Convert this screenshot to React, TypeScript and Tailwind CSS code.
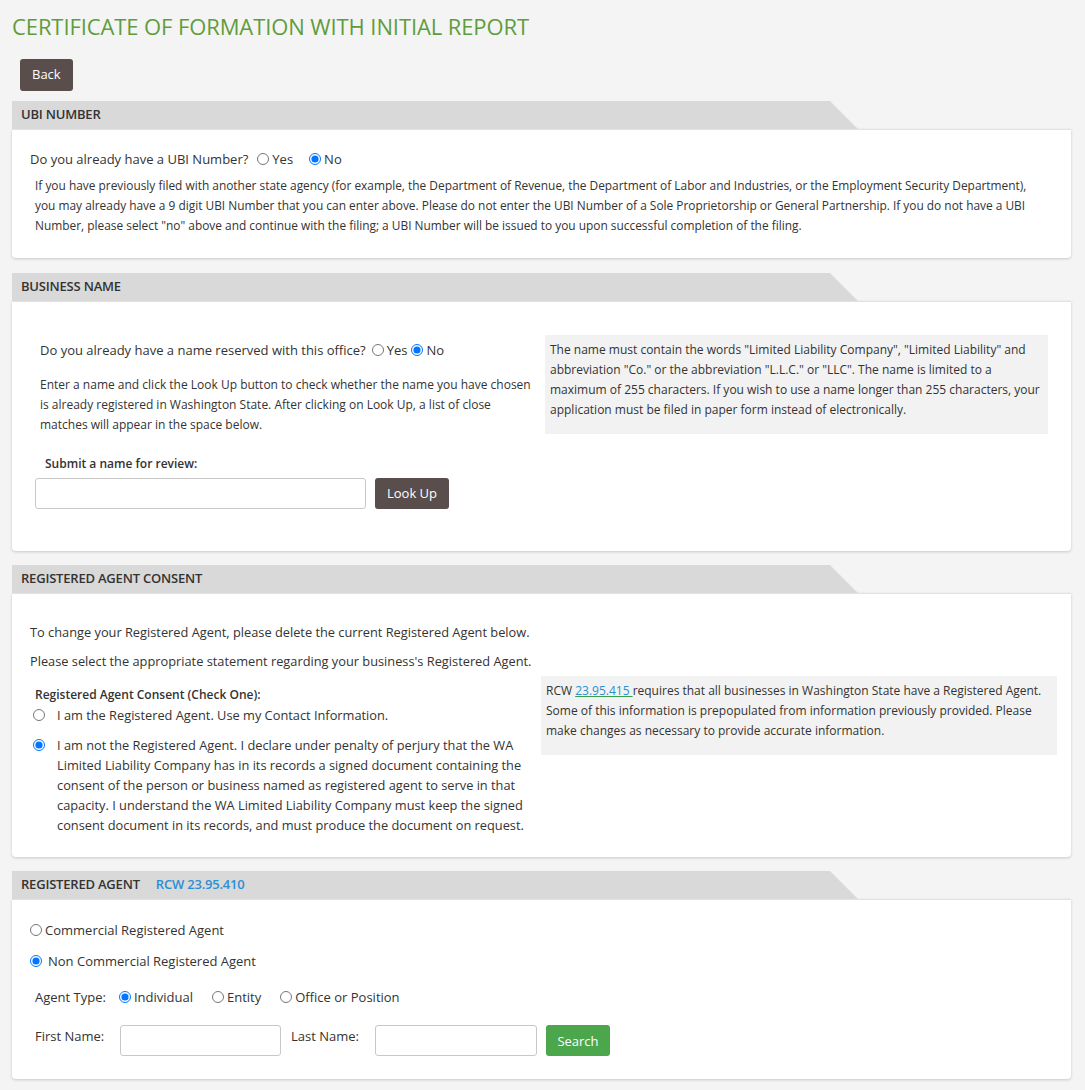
import React from "react"

const font = { fontFamily: '"Open Sans", "Liberation Sans", sans-serif' }

function SectionHeader({ title, children }: { title: string; children?: React.ReactNode }) {
  return (
    <div className="w-[846px] h-[28px] bg-[#d9d9d9] flex items-center pl-[9px] [clip-path:polygon(0_0,calc(100%-28px)_0,100%_100%,0_100%)]">
      <span className="text-[13px] font-semibold text-[#333] tracking-[-0.2px]">{title}</span>
      {children}
    </div>
  )
}

function Card({ className, children }: { className?: string; children: React.ReactNode }) {
  return (
    <div className={"bg-white border-t border-[#e2e2e2] rounded-b-[4px] shadow-[0_1px_3px_rgba(0,0,0,0.18)] " + (className ?? "")}>
      {children}
    </div>
  )
}

function Radio({ name, checked, label, className }: { name: string; checked?: boolean; label: string; className?: string }) {
  return (
    <label className={"inline-flex items-center " + (className ?? "")}>
      <input type="radio" name={name} defaultChecked={checked} className="m-0 w-[12px] h-[12px] mr-[3px]" />
      <span>{label}</span>
    </label>
  )
}

export default function App() {
  return (
    <div className="min-h-[1090px] bg-[#f4f4f4] text-[#333]" style={font}>
      <div className="pl-[12px] w-[1071px] pb-[12px]">
        <h1 className="pt-[11px] text-[22px] leading-[30px] text-[#5f9d3c] tracking-[-0.1px]">
          CERTIFICATE OF FORMATION WITH INITIAL REPORT
        </h1>
        <div className="pt-[18px] pl-[8px] pb-[10px]">
          <button className="h-[32px] px-[12px] rounded-[3px] bg-[#594e4b] text-white text-[13px]">Back</button>
        </div>

        {/* UBI number */}
        <SectionHeader title="UBI NUMBER" />
        <Card className="pt-[19px] pb-[23px]">
          <div className="pl-[18px] flex items-center text-[13px] leading-[20px]">
            <span className="mr-[9px]">Do you already have a UBI Number?</span>
            <Radio name="ubi" label="Yes" className="mr-[16px]" />
            <Radio name="ubi" label="No" checked />
          </div>
          <p className="pl-[23px] pr-[30px] pt-[6px] text-[11.9px] leading-[20px]">
            If you have previously filed with another state agency (for example, the Department of Revenue, the Department of Labor and Industries, or the Employment Security Department), you may already have a 9 digit UBI Number that you can enter above. Please do not enter the UBI Number of a Sole Proprietorship or General Partnership. If you do not have a UBI Number, please select "no" above and continue with the filing; a UBI Number will be issued to you upon successful completion of the filing.
          </p>
        </Card>

        {/* Business name */}
        <div className="mt-[15px]">
          <SectionHeader title="BUSINESS NAME" />
        </div>
        <Card className="pt-[33px] pb-[42px]">
          <div className="flex">
            <div className="pl-[23px] w-[533px]">
              <div className="pl-[5px] flex items-center text-[13px] leading-[20px] pt-[5px]">
                <span className="mr-[6px]">Do you already have a name reserved with this office?</span>
                <Radio name="reserved" label="Yes" className="mr-[4px]" />
                <Radio name="reserved" label="No" checked />
              </div>
              <p className="pl-[5px] pt-[15px] text-[12px] leading-[20px] pr-[6px]">
                Enter a name and click the Look Up button to check whether the name you have chosen is already registered in Washington State. After clicking on Look Up, a list of close matches will appear in the space below.
              </p>
              <div className="pl-[10px] pt-[19px] text-[12px] font-semibold leading-[20px]">Submit a name for review:</div>
              <div className="flex pt-[4px] gap-[9px]">
                <input className="w-[331px] h-[31px] border border-[#c8c8c8] rounded-[3px] bg-white" />
                <button className="h-[31px] w-[74px] rounded-[3px] bg-[#594e4b] text-white text-[13px]">Look Up</button>
              </div>
            </div>
            <div className="w-[503px] h-[99px] bg-[#f2f2f2] px-[5px] pt-[5px] text-[12px] leading-[20px]">
              The name must contain the words "Limited Liability Company", "Limited Liability" and abbreviation "Co." or the abbreviation "L.L.C." or "LLC". The name is limited to a maximum of 255 characters. If you wish to use a name longer than 255 characters, your application must be filed in paper form instead of electronically.
            </div>
          </div>
        </Card>

        {/* Registered agent consent */}
        <div className="mt-[14px]">
          <SectionHeader title="REGISTERED AGENT CONSENT" />
        </div>
        <Card className="pt-[28px] pb-[22px]">
          <p className="pl-[18px] text-[12.8px] leading-[20px]">
            To change your Registered Agent, please delete the current Registered Agent below.
          </p>
          <p className="pl-[18px] pt-[9px] text-[12.8px] leading-[20px]">
            Please select the appropriate statement regarding your business's Registered Agent.
          </p>
          <div className="flex pt-[5px]">
            <div className="w-[529px] pl-[23px] pt-[10px]">
              <div className="text-[12px] font-semibold leading-[18px]">Registered Agent Consent (Check One):</div>
              <label className="flex items-start text-[12.8px] leading-[20px] pt-[1px]">
                <input type="radio" name="consent" className="m-0 mt-[4px] ml-[-2px] w-[12px] h-[12px] shrink-0" />
                <span className="pl-[12px]">I am the Registered Agent. Use my Contact Information.</span>
              </label>
              <label className="flex items-start text-[12.8px] leading-[20px] pt-[10px]">
                <input type="radio" name="consent" defaultChecked className="m-0 mt-[4px] ml-[-2px] w-[12px] h-[12px] shrink-0" />
                <span className="pl-[12px] pr-[4px]">
                  I am not the Registered Agent. I declare under penalty of perjury that the WA Limited Liability Company has in its records a signed document containing the consent of the person or business named as registered agent to serve in that capacity. I understand the WA Limited Liability Company must keep the signed consent document in its records, and must produce the document on request.
                </span>
              </label>
            </div>
            <div className="w-[516px] h-[79px] bg-[#f2f2f2] px-[5px] pt-[5px] text-[12px] leading-[20px]">
              RCW <a href="#" className="text-[#2a8fd6] underline decoration-[#3aa04a]">23.95.415&nbsp;</a>requires that all businesses in Washington State have a Registered Agent. Some of this information is prepopulated from information previously provided. Please make changes as necessary to provide accurate information.
            </div>
          </div>
        </Card>

        {/* Registered agent */}
        <div className="mt-[14px]">
          <SectionHeader title="REGISTERED AGENT">
            <span className="ml-[16px] text-[13px] font-semibold text-[#2a8fd6] tracking-[-0.2px]">RCW 23.95.410</span>
          </SectionHeader>
        </div>
        <Card className="pt-[20px] pb-[23px] text-[13px] leading-[20px]">
          <div className="pl-[18px]">
            <Radio name="agent" label="Commercial Registered Agent" />
          </div>
          <div className="pl-[18px] pt-[10px]">
            <label className="inline-flex items-center">
              <input type="radio" name="agent" defaultChecked className="m-0 w-[12px] h-[12px] mr-[6px]" />
              <span>Non Commercial Registered Agent</span>
            </label>
          </div>
          <div className="pl-[23px] pt-[15px] flex items-center">
            <span className="mr-[13px]">Agent Type:</span>
            <Radio name="type" label="Individual" checked className="mr-[19px]" />
            <Radio name="type" label="Entity" className="mr-[19px]" />
            <Radio name="type" label="Office or Position" />
          </div>
          <div className="pl-[23px] pt-[18px] flex items-start">
            <span className="w-[85px] pt-[1px]">First Name:</span>
            <input className="w-[161px] h-[31px] border border-[#c8c8c8] rounded-[3px] bg-white" />
            <span className="w-[94px] pl-[10px] pt-[1px]">Last Name:</span>
            <input className="w-[162px] h-[31px] border border-[#c8c8c8] rounded-[3px] bg-white" />
            <button className="ml-[9px] h-[31px] w-[64px] rounded-[3px] bg-[#4ca64c] text-white text-[13px]">Search</button>
          </div>
        </Card>
      </div>
    </div>
  )
}
